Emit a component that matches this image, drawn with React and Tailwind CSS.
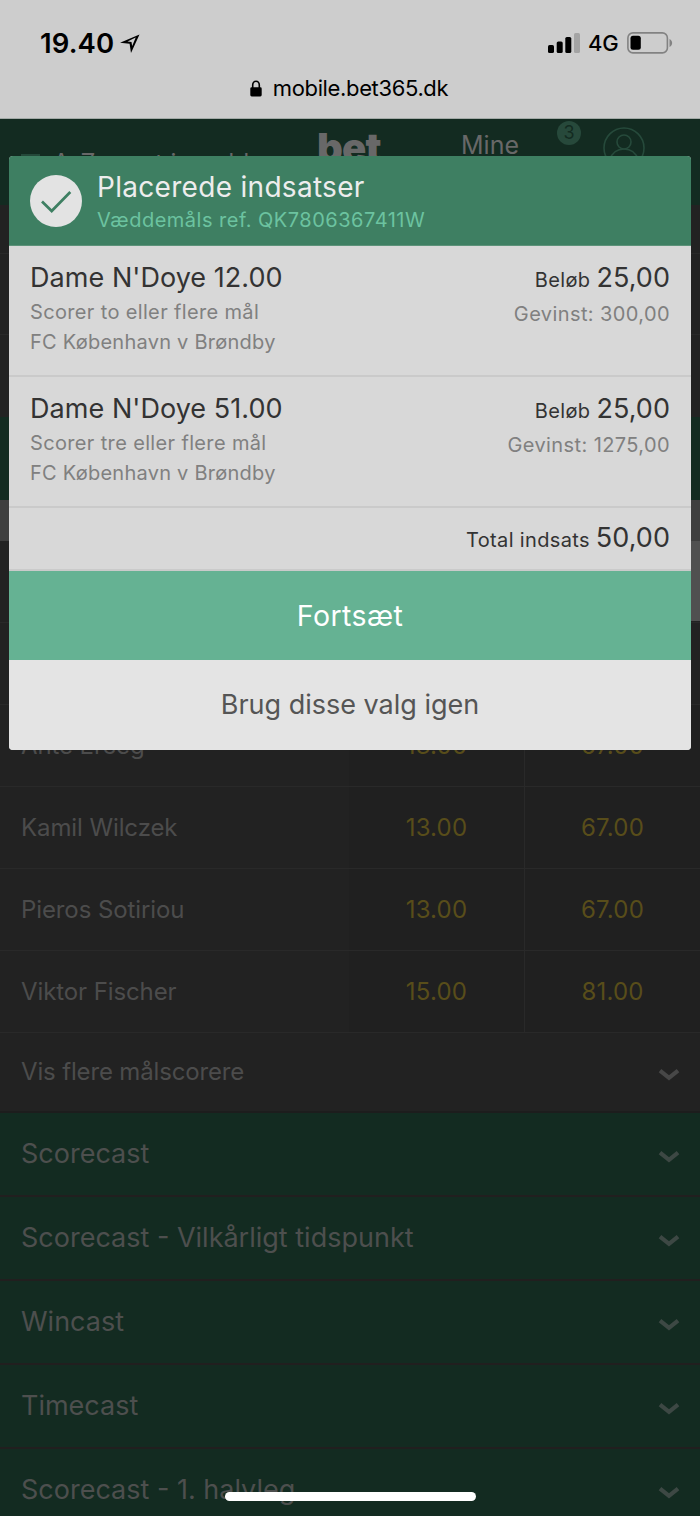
import clsx from 'clsx';

const players = [
  { name: 'Ante Erceg', odds: ['13.00', '67.00'] },
  { name: 'Kamil Wilczek', odds: ['13.00', '67.00'] },
  { name: 'Pieros Sotiriou', odds: ['13.00', '67.00'] },
  { name: 'Viktor Fischer', odds: ['15.00', '81.00'] },
];

const markets = [
  'Scorecast',
  'Scorecast - Vilkårligt tidspunkt',
  'Wincast',
  'Timecast',
  'Scorecast - 1. halvleg',
];

const bets = [
  {
    title: "Dame N'Doye 12.00",
    market: 'Scorer to eller flere mål',
    match: 'FC København v Brøndby',
    stake: '25,00',
    payout: '300,00',
  },
  {
    title: "Dame N'Doye 51.00",
    market: 'Scorer tre eller flere mål',
    match: 'FC København v Brøndby',
    stake: '25,00',
    payout: '1275,00',
  },
];

function Chevron({ className }) {
  return (
    <svg width="22" height="14" viewBox="0 0 22 14" fill="none" className={className}>
      <path d="M2 2.600 11 9.800l9-7.200" stroke="currentColor" strokeWidth="4.200" />
    </svg>
  );
}

function StatusBar() {
  return (
    <div className="h-[119px] bg-[#cdcdcd] border-b border-[#a3aaa7] text-black">
      <div className="h-[70px] pt-[15px] pl-10 pr-[27px] flex items-center justify-between">
        <div className="flex items-center gap-1.5">
          <span className="text-[27.5px] leading-8 font-semibold tracking-[0.1px]">19.40</span>
          <svg width="20" height="20" viewBox="0 0 20 20" fill="currentColor" fillRule="evenodd" className="mt-0.5">
            <path d="M19.5.5 0 8.8l9.6 1L11 19zM15.7 3.600 7.500 7.500l4 .6.7 4z" />
          </svg>
        </div>
        <div className="flex items-center">
          <svg width="32" height="20" viewBox="0 0 32 20" fill="currentColor">
            <rect x="0" y="12" width="6" height="8" rx="1.6" />
            <rect x="8.7" y="8.5" width="6" height="11.5" rx="1.6" />
            <rect x="17.3" y="4" width="6" height="16" rx="1.6" />
            <rect x="26" y="0" width="6" height="20" rx="1.6" opacity="0.2" />
          </svg>
          <span className="ml-2 w-[31px] text-[22px] leading-8 font-medium tracking-[-0.3px]">4G</span>
          <svg width="46" height="22" viewBox="0 0 46 22" className="ml-2">
            <rect x="0.9" y="0.9" width="39.5" height="20" rx="5" fill="none" stroke="#828282" strokeWidth="1.6" />
            <rect x="3.5" y="3.8" width="10.3" height="14" rx="2.5" fill="#000" />
            <path d="M42.5 7C46 8.5 46 13.5 42.5 15z" fill="#828282" />
          </svg>
        </div>
      </div>
      <div className="h-9 pr-0.5 flex items-center justify-center gap-[11px]">
        <svg width="12" height="17" viewBox="0 0 12 17">
          <path d="M2.7 8V5a3.3 3.7 0 0 1 6.6 0v3" fill="none" stroke="currentColor" strokeWidth="1.6" />
          <rect x="0.3" y="7.3" width="11.4" height="9.2" rx="1.4" fill="currentColor" />
        </svg>
        <span className="text-[22px] leading-7 tracking-[-0.36px]">mobile.bet365.dk</span>
      </div>
    </div>
  );
}

function SiteHeader() {
  return (
    <div className="h-[86px] bg-[#132b21] flex items-start text-[#686868]">
      <div className="w-[317px] pl-[21px] pt-7 flex items-center">
        <div className="w-[19px] flex flex-col gap-1.5">
          <div className="h-0.5 bg-[#24493a]" />
          <div className="h-0.5 bg-[#24493a]" />
          <div className="h-0.5 bg-[#24493a]" />
        </div>
        <span className="ml-[13px] text-2xl tracking-[0.3px] whitespace-nowrap">A-Z sport i vædd</span>
      </div>
      <div className="w-36 pt-[9px] text-[40px] leading-10 font-black tracking-[-0.8px]">bet</div>
      <div className="w-24 pt-2.5 text-[25px] leading-8">Mine</div>
      <div className="mt-0.5 w-6 h-6 rounded-full bg-[#27493b] text-[#132b21] text-lg leading-6 text-center">
        3
      </div>
      <svg width="42" height="42" viewBox="0 0 42 42" fill="none" stroke="#264a3b" strokeWidth="1.6" className="ml-[22px] mt-2">
        <circle cx="21" cy="21" r="20" />
        <circle cx="21" cy="15" r="7" />
        <path d="M6.5 33c2.5-7 7.5-11 14.5-11s12 4 14.5 11" />
      </svg>
    </div>
  );
}

function PlayerRow({ name, odds }) {
  return (
    <div className="h-[82px] flex border-b border-[#292929] text-2xl">
      <div className="w-[349px] pl-[21px] flex items-center tracking-[-0.1px] text-[#4c4c4c]">{name}</div>
      {odds.map((odd, i) => (
        <div
          key={i}
          className={clsx(
            'bg-[#202020] flex items-center justify-center tracking-[0.2px] text-[#584d1a]',
            i === 0 ? 'w-44 border-r border-[#292929]' : 'w-[175px]'
          )}
        >
          {odd}
        </div>
      ))}
    </div>
  );
}

function Page() {
  return (
    <div className="bg-[#222222]">
      <StatusBar />
      <SiteHeader />
      <div className="h-[49px] border-b border-[#292929]" />
      <div className="h-[81px] border-b border-[#292929]" />
      <div className="h-[82px]" />
      <div className="h-[83px] bg-[#132b21]" />
      <div className="h-[41px] bg-[#3e3e3e]" />
      <div className="h-[82px] border-b border-[#292929] flex justify-end">
        <div className="w-[175px] h-20 bg-[#505050]" />
      </div>
      <div className="h-[82px] border-b border-[#292929]" />
      {players.map((p) => (
        <PlayerRow key={p.name} {...p} />
      ))}
      <div className="h-20 pl-[21px] pr-5 flex items-center justify-between border-b-2 border-[#1d1d1d] text-2xl text-[#4c4c4c]">
        <span className="tracking-[-0.15px]">Vis flere målscorere</span>
        <Chevron className="mt-[5px] text-[#474747]" />
      </div>
      {markets.map((m) => (
        <div
          key={m}
          className="h-21 pl-[21px] pr-5 flex items-center justify-between bg-[#132b21] border-b-2 border-[#211f1f] text-[27px] text-[#4d4f4e]"
        >
          <span>{m}</span>
          <Chevron className="mt-[5px] text-[#3d4844]" />
        </div>
      ))}
    </div>
  );
}

function Receipt() {
  return (
    <div className="absolute top-[156px] left-[9px] w-[682px] h-[594px] rounded overflow-hidden bg-[#d8d8d8] text-[#333333]">
      <div className="h-[90px] pl-[21px] pt-0.5 flex items-center bg-[#3e7f62] border-b border-[#5c9279]">
        <svg width="52" height="52" viewBox="0 0 52 52" fill="none" className="mb-px">
          <circle cx="26" cy="26" r="26" fill="#e3e3e3" />
          <path d="m12 26.5 9.7 9.5L40.3 17" stroke="#3e7f62" strokeWidth="2.7" />
        </svg>
        <div className="ml-[15px]">
          <div className="text-[28px] leading-9 tracking-[0.3px] text-[#ededed]">Placerede indsatser</div>
          <div className="text-xl leading-[30px] tracking-[0.5px] text-[#6cc3a0]">Væddemåls ref. QK7806367411W</div>
        </div>
      </div>
      {bets.map((bet) => (
        <div
          key={bet.title}
          className="h-[131px] px-[21px] pt-3 flex justify-between border-b-2 border-[#cacaca] text-xl tracking-[0.35px] text-[#808080]"
        >
          <div>
            <div className="h-[39px] text-[27px] leading-10 tracking-[0.05px] text-[#333333]">{bet.title}</div>
            <div className="leading-[30px]">{bet.market}</div>
            <div className="leading-[30px] tracking-[0.25px]">{bet.match}</div>
          </div>
          <div className="text-right">
            <div className="h-[39px] leading-10 text-[#333333]">
              Beløb <span className="text-[27px] tracking-[0.05px]">{bet.stake}</span>
            </div>
            <div className="leading-[34px] tracking-[0.4px]">Gevinst: {bet.payout}</div>
          </div>
        </div>
      ))}
      <div className="h-[63px] px-[21px] pb-0.5 flex items-center justify-end border-b-2 border-[#cacaca] text-xl tracking-[0.35px]">
        <div>
          Total indsats <span className="text-[27px] tracking-[0.05px]">50,00</span>
        </div>
      </div>
      <button className="block w-full h-[89px] pt-0.5 bg-[#65b293] text-[28.5px] tracking-[0.4px] text-white">Fortsæt</button>
      <button className="block w-full h-[90px] bg-[#e4e4e4] text-[27px] text-[#555555]">Brug disse valg igen</button>
    </div>
  );
}

export default function App() {
  return (
    <div className="relative w-[700px] h-[1516px] overflow-hidden font-[Inter,sans-serif]">
      <Page />
      <Receipt />
      <div className="absolute left-[225px] bottom-[15px] w-[251px] h-[9px] rounded-full bg-white" />
    </div>
  );
}
